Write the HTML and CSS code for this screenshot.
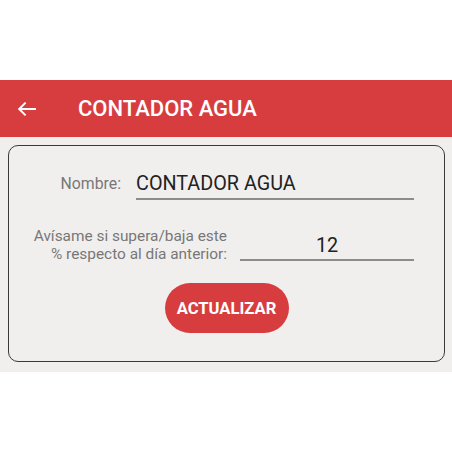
FILE: index.html
```html
<!DOCTYPE html>
<html lang="es">
<head>
  <meta charset="UTF-8" />
  <meta name="viewport" content="width=device-width, initial-scale=1.0" />
  <title>Contador Agua</title>
  <link rel="stylesheet" href="styles.css">
</head>
<body>
  <div class="top-space"></div>

  <header class="appbar">
    <svg class="back" width="20" height="16" viewBox="0 0 20 16">
      <path d="M19 8H2.5M8.6 1.6L2.2 8l6.4 6.4" fill="none" stroke="#fff" stroke-width="2" />
    </svg>
    <h1>CONTADOR AGUA</h1>
  </header>

  <main class="content">
    <div class="card">
      <div class="row row-name">
        <label class="label">Nombre:</label>
        <div class="field">CONTADOR AGUA</div>
      </div>

      <div class="row row-pct">
        <label class="label">Avísame si supera/baja este<br>% respecto al día anterior:</label>
        <div class="field center">12</div>
      </div>

      <button class="btn">ACTUALIZAR</button>
    </div>
  </main>
</body>
</html>
```

FILE: styles.css
```css
body {
  margin: 0;
  background: #fff;
  font-family: Roboto, "Liberation Sans", sans-serif;
}
.top-space {
  height: 80px;
}
.appbar {
  height: 57px;
  background: #d73d3f;
  display: flex;
  align-items: center;
  padding-left: 17px;
  color: #fff;
}
.back {
  display: block;
}
.appbar h1 {
  margin: 0 0 0 41px;
  font-size: 22px;
  font-weight: 500;
}
.content {
  background: #f1efee;
  padding: 8px 7px 10px 8px;
}
.card {
  height: 217px;
  box-sizing: border-box;
  border: 1px solid #3a3a3a;
  border-radius: 10px;
  display: flex;
  flex-direction: column;
  align-items: center;
}
.row {
  display: flex;
  align-self: stretch;
  padding-right: 30px;
}
.label {
  color: #777;
  font-size: 15.8px;
  text-align: right;
  flex-shrink: 0;
}
.field {
  flex: 1;
  font-size: 19.8px;
  line-height: 24px;
  color: #222;
  border-bottom: 2px solid #8c8c8c;
}
.field.center {
  text-align: center;
}
.row-name {
  margin-top: 24px;
  align-items: flex-start;
}
.row-name .label {
  width: 112px;
  line-height: 24px;
  padding-top: 2px;
  margin-right: 15px;
}
.row-name .field {
  padding-top: 2px;
  padding-bottom: 2px;
}
.row-pct {
  margin-top: 27px;
  align-items: flex-end;
}
.row-pct .label {
  width: 218px;
  font-size: 15.4px;
  line-height: 18px;
  margin-right: 13px;
  margin-bottom: -2px;
}
.row-pct .field {
  padding-bottom: 1px;
}
.btn {
  margin-top: 22px;
  width: 124px;
  height: 50px;
  border: none;
  border-radius: 25px;
  background: #d73d3f;
  color: #fff;
  font-family: Roboto, "Liberation Sans", sans-serif;
  font-size: 16.6px;
  font-weight: bold;
  cursor: pointer;
}
```
